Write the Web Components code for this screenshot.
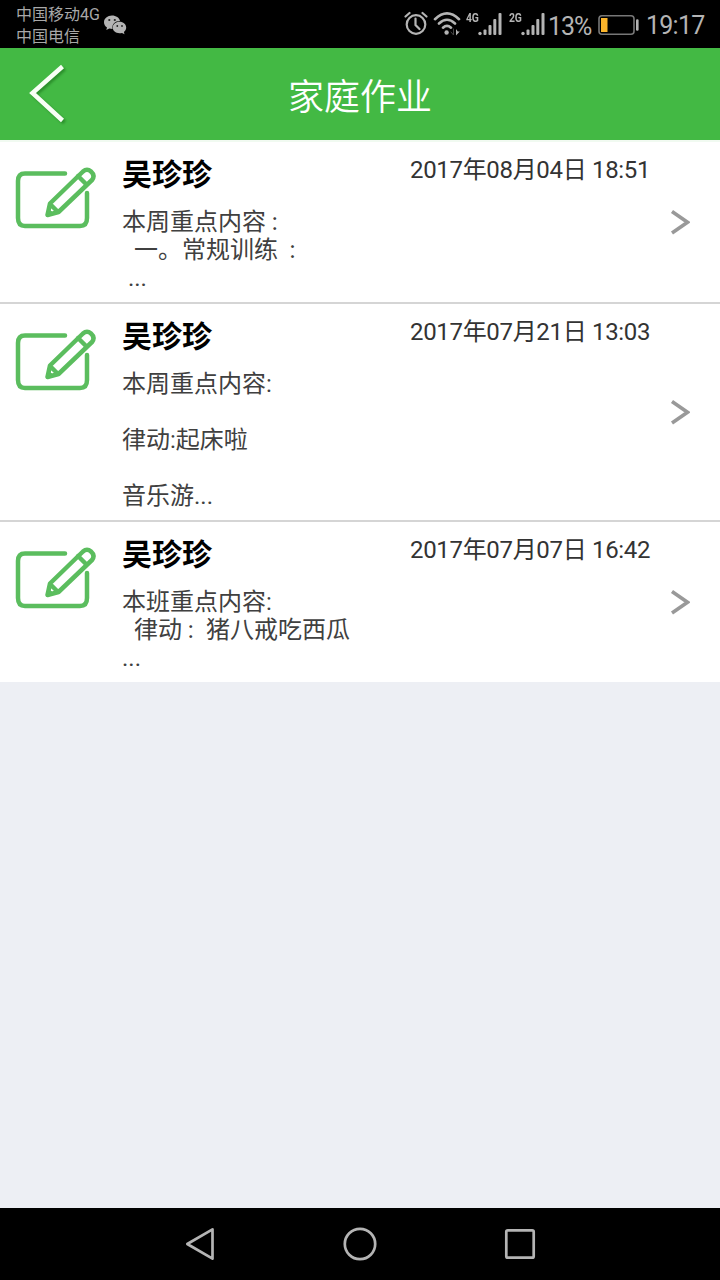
<!DOCTYPE html>
<html lang="zh-CN">
<head>
<meta charset="utf-8">
<title>家庭作业</title>
<style>
html,body{margin:0;height:100%}
body{font-family:Roboto,"Noto Sans CJK SC",sans-serif;background:#edeff4;overflow:hidden}
homework-item i{font-style:normal;font-size:19px;line-height:1;padding:0 1px 0 4px}
</style>
</head>
<body>
<phone-screen>
  <status-bar slot="top"></status-bar>
  <nav-header slot="top">家庭作业</nav-header>
  <homework-item name="吴珍珍" date="2017年08月04日 18:51"><p>本周重点内容<i>：</i></p><p>  一。常规训练 <i>：</i></p><p> ...</p></homework-item>
  <homework-item name="吴珍珍" date="2017年07月21日 13:03"><p>本周重点内容:</p><p></p><p>律动:起床啦</p><p></p><p>音乐游...</p></homework-item>
  <homework-item name="吴珍珍" date="2017年07月07日 16:42"><p>本班重点内容:</p><p>  律动<i>：</i>猪八戒吃西瓜</p><p>...</p></homework-item>
  <system-nav slot="bottom"></system-nav>
</phone-screen>
<script>
const define = (name, html, setup) => customElements.define(name, class extends HTMLElement {
  constructor() {
    super();
    this.attachShadow({mode: 'open'}).innerHTML = html;
  }
  connectedCallback() { if (setup) setup(this); }
});

define('phone-screen', `
<style>
:host{display:flex;flex-direction:column;width:720px;height:1280px;background:#edeff4}
main{flex:1;padding-top:2px;background:linear-gradient(#f1faf1 2px,transparent 2px)}
</style>
<slot name="top"></slot><main><slot></slot></main><slot name="bottom"></slot>`);

define('signal-bars', `
<style>
:host{display:flex;color:#b4b4b4}
span{font:bold 13px/12px Roboto,sans-serif;width:12px;letter-spacing:-.4px;transform:scaleX(.8);transform-origin:0 0;margin-top:-1px}
svg{display:block}
</style>
<span><slot></slot></span>
<svg width="25" height="24" fill="#b4b4b4"><circle cx="2" cy="20.500" r="1.700"/><rect x="5.500" y="16.500" width="3" height="5.500" rx="1"/><rect x="10.500" y="12" width="3" height="10" rx="1"/><rect x="15.300" y="6" width="3" height="16" rx="1"/><rect x="20.500" y="0" width="3" height="22" rx="1"/></svg>`);

define('status-bar', `
<style>
:host{display:flex;justify-content:space-between;height:48px;background:#000;color:#b4b4b4}
.left,.right{display:flex}
.carrier{margin:4px 0 0 16px;font-size:16px;line-height:22px;color:#a8a8a8;white-space:nowrap;width:87px}
.wechat{margin-top:14px}
svg{display:block;flex:none}
.right{width:316px}
.alarm{margin-top:11px}
.wifi{margin:11px 0 0 5px}
signal-bars{margin-top:13px}
.one{margin-left:5px}.two{margin-left:6px}
.pct{font-size:25px;line-height:30px;margin:12px 0 0 2px;width:50px;letter-spacing:-1px}
.battery{margin-top:14px}
.time{font-size:25px;line-height:30px;margin:11px 0 0 7px;white-space:nowrap;letter-spacing:-.75px}
</style>
<div class="left">
 <div class="carrier"><div>中国移动4G</div><div>中国电信</div></div>
 <svg class="wechat" width="25" height="22"><path fill="#b4b4b4" d="M9 1.500c-4.500 0-8 3-8 6.700 0 2.200 1.100 4 3 5.200l-.7 2.600 3-1.500c1 .3 2 .4 3.200.4C8.700 10.200 12 7 17 7c-.6-3.200-4-5.500-8-5.500z"/><path fill="#b4b4b4" d="M16.500 7.800c-3.900 0-6.800 2.600-6.800 5.800s2.900 5.700 6.800 5.700c.9 0 1.800-.1 2.500-.4l2.500 1.400-.6-2.200c1.500-1.100 2.300-2.700 2.300-4.500 0-3.200-2.900-5.800-6.700-5.800z"/><g fill="#222"><circle cx="6.300" cy="6" r="1.100"/><circle cx="11.800" cy="6" r="1.100"/><circle cx="14.300" cy="12" r=".9"/><circle cx="19" cy="12" r=".9"/></g></svg>
</div>
<div class="right">
 <svg class="alarm" width="24" height="26" fill="none" stroke="#b4b4b4" stroke-width="2.200"><circle cx="12" cy="13.500" r="9.300"/><path d="M11.500 7.500v6.500l4 4M1.500 5.500l4-3.500M22.500 5.500l-4-3.500" stroke-linecap="round"/></svg>
 <svg class="wifi" width="28" height="26" fill="none" stroke="#b4b4b4" stroke-width="2.600" stroke-linecap="round"><path d="M2 8.200Q14-3.500 26 8.200M6 12.500q8-7.500 16 0M10 16.700q4-3.800 8 0"/><circle cx="13.600" cy="21.500" r="2.200" fill="#b4b4b4" stroke="none"/><path d="M23 18v6.500l3.800-4h-2z" fill="#b4b4b4" stroke="none"/><path d="M20.500 18v6l-2.500-3" stroke="#444" stroke-width="1"/></svg>
 <signal-bars class="one">4G</signal-bars><signal-bars class="two">2G</signal-bars>
 <div class="pct">13%</div>
 <svg class="battery" width="41" height="22"><rect x="1" y="1.700" width="35" height="18.500" rx="3" fill="none" stroke="#777" stroke-width="1.600"/><rect x="3" y="4" width="6.500" height="14" fill="#fcb52b"/><rect x="38" y="5.300" width="2.600" height="11.500" rx="1.200" fill="#b4b4b4"/></svg>
 <div class="time">19:17</div>
</div>`);

define('nav-header', `
<style>
:host{display:grid;grid-template-columns:100px 1fr 100px;align-items:center;height:92px;background:#43b944;color:#fff}
h1{margin:7px 0 0;font-size:36px;line-height:44px;font-weight:350;text-align:center}
svg{display:block;margin-left:24px;filter:drop-shadow(2px 2px 1px rgba(0,70,0,.35))}
</style>
<svg width="48" height="70" fill="none" stroke="#f8fff6" stroke-width="4.500"><path d="M38.500 7.500L8.500 34l30 27.500"/></svg>
<h1><slot></slot></h1>`);

define('homework-item', `
<style>
:host{display:grid;grid-template-columns:122px 1fr 80px;background:#fff;color:#333;border-bottom:2px solid #d5d5d5}
:host(:last-of-type){border-bottom:0}
.edit{display:block;margin:24px 0 0 14px}
header{display:flex;justify-content:space-between;height:66px}
h2{margin:13px 0 0;font-size:30px;line-height:40px;font-weight:700;color:#000}
time{font-size:24px;line-height:32px;width:230px;margin:12px 0 0;white-space:nowrap;letter-spacing:-.32px}
.text{white-space:pre;font-size:24px;line-height:28px;padding-bottom:10px;color:#404040}
::slotted(p){margin:0;height:28px}
.go{align-self:center;margin-left:20px}
</style>
<svg class="edit" width="84" height="64" viewBox="0 0 84 64" fill="none" stroke="#5bbd5e" stroke-width="4.500" stroke-linejoin="round" stroke-linecap="round"><path d="M51 7.500H11Q4 7.500 4 15V52Q4 60 11 60H66Q73 60 73 52V27"/><path d="M33.500 49L36 37.500 69 5.500Q73 2 77 5.500Q81.500 9.500 78 14L44.500 46ZM36 38L44 46M64 10L73 19"/><path d="M33 50l1.500-7 5.500 5z" fill="#5bbd5e" stroke-width="1"/></svg>
<section><header><h2></h2><time></time></header><div class="text"><slot></slot></div></section>
<svg class="go" width="30" height="28" fill="none" stroke="#999" stroke-width="3.600"><path d="M12 3.500L27.500 14.300 12 25"/></svg>`,
el => {
  el.shadowRoot.querySelector('h2').textContent = el.getAttribute('name');
  el.shadowRoot.querySelector('time').textContent = el.getAttribute('date');
});

define('system-nav', `
<style>
:host{display:flex;justify-content:center;align-items:center;gap:120px;height:72px;background:#000}
svg{display:block}
</style>
<svg width="40" height="40" fill="none" stroke="#b4b4b4" stroke-width="2.700" stroke-linejoin="round"><path d="M32.500 5.300V34.700L7.300 20z"/></svg>
<svg width="40" height="40" fill="none" stroke="#b4b4b4" stroke-width="2.700"><circle cx="20" cy="20" r="15.200"/></svg>
<svg width="40" height="40" fill="none" stroke="#b4b4b4" stroke-width="2.700"><rect x="6.300" y="6.300" width="27.400" height="27.400" rx="1.500"/></svg>`);
</script>
</body>
</html>
